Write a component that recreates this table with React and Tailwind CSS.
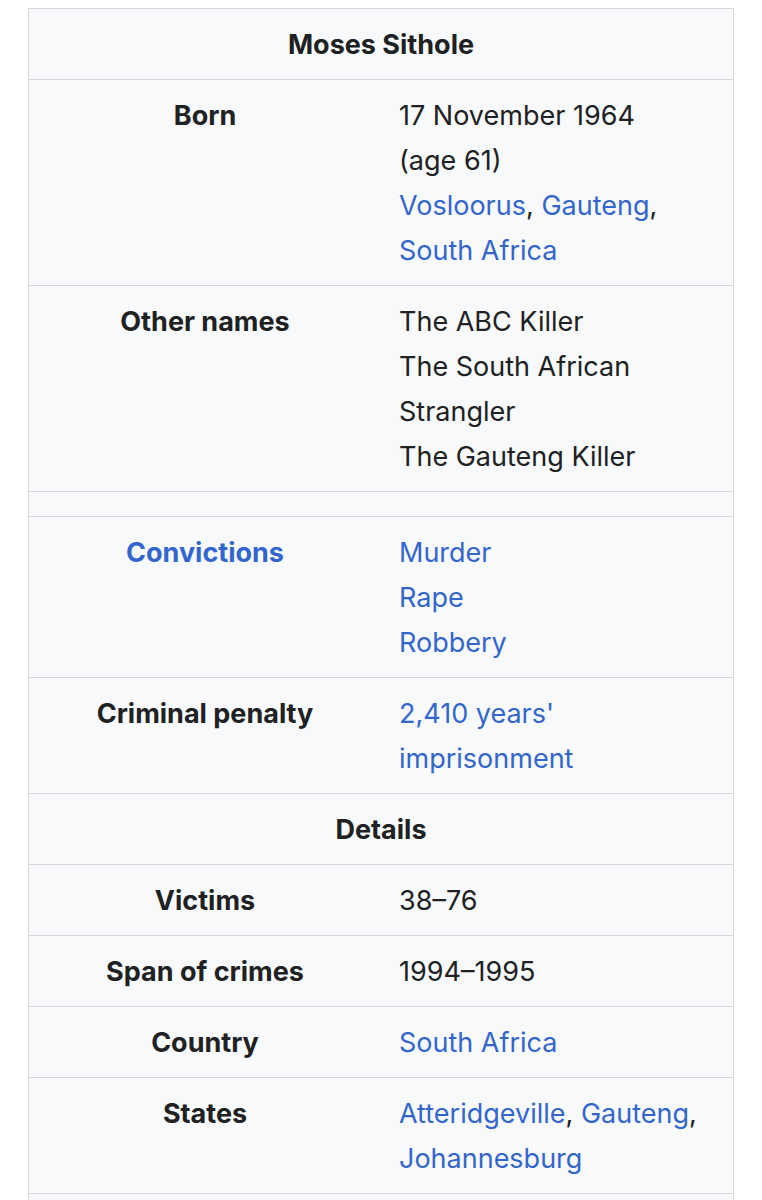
import React from "react";

const L = ({ children }) => <span className="text-[#3366cc]">{children}</span>;

function Row({ label, labelLink, children }) {
  return (
    <div className="grid grid-cols-[352px_1fr] border-t border-[#d6d8dc]">
      <div className={`pt-[13px] pb-[12px] text-center font-bold ${labelLink ? "text-[#3366cc]" : ""}`}>{label}</div>
      <div className="pt-[13px] pb-[12px] pl-[18px] pr-2">{children}</div>
    </div>
  );
}

function Header({ children, first }) {
  return (
    <div className={`pt-[13px] pb-[12px] text-center font-bold ${first ? "" : "border-t border-[#d6d8dc]"}`}>
      {children}
    </div>
  );
}

export default function App() {
  return (
    <div className="bg-white w-[762px] h-[1200px] overflow-hidden pt-[8px] pl-[28px]" style={{ fontFamily: "Inter, 'Noto Sans', sans-serif" }}>
      <div className="w-[706px] border border-[#d6d8dc] bg-[#f8f9fa] text-[#202122] text-[27px] leading-[45px]">
        <Header first>Moses Sithole</Header>
        <Row label="Born">
          <div>17 November 1964</div>
          <div>(age 61)</div>
          <div><L>Vosloorus</L>, <L>Gauteng</L>,</div>
          <div><L>South Africa</L></div>
        </Row>
        <Row label="Other names">
          <div>The ABC Killer</div>
          <div>The South African</div>
          <div>Strangler</div>
          <div>The Gauteng Killer</div>
        </Row>
        <div className="border-t border-[#d6d8dc] h-[25px]"></div>
        <Row label="Convictions" labelLink>
          <div><L>Murder</L></div>
          <div><L>Rape</L></div>
          <div><L>Robbery</L></div>
        </Row>
        <Row label="Criminal penalty">
          <div><L>2,410 years'</L></div>
          <div><L>imprisonment</L></div>
        </Row>
        <Header>Details</Header>
        <Row label="Victims">
          <div>38–76</div>
        </Row>
        <Row label="Span of crimes">
          <div>1994–1995</div>
        </Row>
        <Row label="Country">
          <div><L>South Africa</L></div>
        </Row>
        <Row label="States">
          <div><L>Atteridgeville</L>, <L>Gauteng</L>,</div>
          <div><L>Johannesburg</L></div>
        </Row>
        <div className="border-t border-[#d6d8dc] h-[40px]"></div>
      </div>
    </div>
  );
}
